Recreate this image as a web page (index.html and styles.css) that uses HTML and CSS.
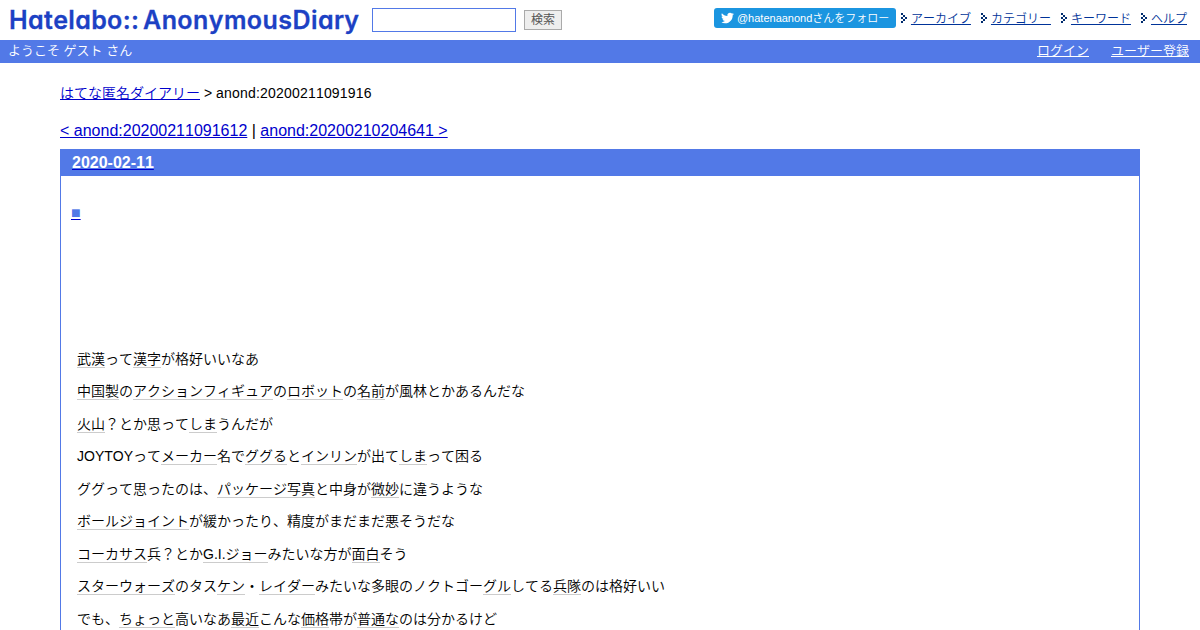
FILE: index.html
```html
<!DOCTYPE html>
<html lang="ja">
<head>
  <meta charset="UTF-8">
  <title>anond:20200211091916</title>
  <link rel="stylesheet" href="styles.css">
</head>
<body>

<svg class="defs" width="0" height="0">
  <symbol id="arrow" viewBox="0 0 7 10">
    <path d="M0 0h2v2h-2zM2 2h2v2h-2zM0 4h2v2h-2zM4 4h2v2h-2zM2 6h2v2h-2zM0 8h2v2h-2z"/>
  </symbol>
</svg>

<div class="header">
  <a class="logo" href="#">
    <svg width="360" height="40">
      <text x="9" y="28.5" textLength="130">Hatelabo::</text>
      <text x="143" y="28.5" textLength="216">AnonymousDiary</text>
    </svg>
  </a>
  <form class="search">
    <input type="text" class="search-word">
    <button type="button" class="search-button">検索</button>
  </form>
  <div class="menu">
    <a class="follow" href="#">
      <svg width="13" height="14" viewBox="0 0 24 24"><path d="M23.95 4.57a10 10 0 0 1-2.82.77 4.96 4.96 0 0 0 2.16-2.72c-.95.55-2 .95-3.13 1.18a4.92 4.92 0 0 0-8.38 4.48C7.69 8.1 4.07 6.13 1.64 3.16a4.82 4.82 0 0 0-.67 2.48c0 1.71.87 3.21 2.19 4.1a4.9 4.9 0 0 1-2.23-.62v.06a4.92 4.92 0 0 0 3.95 4.83 5 5 0 0 1-2.21.08 4.94 4.94 0 0 0 4.6 3.42A9.87 9.87 0 0 1 0 19.54a13.99 13.99 0 0 0 7.55 2.21c9.05 0 14-7.5 14-13.98 0-.21 0-.42-.02-.63a9.94 9.94 0 0 0 2.46-2.55z"/></svg>
      <span>@hatenaanondさんをフォロー</span>
    </a>
    <ul>
      <li><svg width="7" height="10"><use href="#arrow"/></svg><a href="#">アーカイブ</a></li>
      <li><svg width="7" height="10"><use href="#arrow"/></svg><a href="#">カテゴリー</a></li>
      <li><svg width="7" height="10"><use href="#arrow"/></svg><a href="#">キーワード</a></li>
      <li><svg width="7" height="10"><use href="#arrow"/></svg><a href="#">ヘルプ</a></li>
    </ul>
  </div>
</div>

<div class="guest-bar">
  <span>ようこそ ゲスト さん</span>
  <div class="guest-links">
    <a href="#">ログイン</a>
    <a href="#">ユーザー登録</a>
  </div>
</div>

<div class="content">
  <div class="breadcrumb"><a href="#">はてな匿名ダイアリー</a> &gt; <span class="title">anond:20200211091916</span></div>
  <div class="pager"><a href="#">&lt; anond:20200211091612</a> | <a href="#">anond:20200210204641 &gt;</a></div>

  <div class="day">
    <h2><a href="#">2020-02-11</a></h2>
    <div class="body">
      <h3><a href="#">■</a></h3>
      <div class="section">
        <p><a>武漢</a>って<a>漢字</a>が格好いいなあ</p>
        <p><a>中国製</a>の<a>アクションフィギュア</a>の<a>ロボット</a>の<a>名前</a>が風林とかあるんだな</p>
        <p><a>火山</a>？とか思って<a>しま</a>うんだが</p>
        <p>JOYTOYって<a>メーカー</a>名で<a>ググる</a>と<a>インリン</a>が出て<a>しま</a>って困る</p>
        <p>ググって思ったのは、<a>パッケージ</a><a>写真</a>と中身が<a>微妙</a>に違うような</p>
        <p><a>ボールジョイント</a>が緩かったり、精度がまだまだ悪そうだな</p>
        <p><a>コーカサス</a>兵？とか<a>G.I.ジョー</a>みたいな方が<a>面白</a>そう</p>
        <p><a>スターウォーズ</a>のタス<a>ケン</a>・<a>レイダー</a>みたいな多眼のノクトゴー<a>グル</a>してる<a>兵隊</a>のは格好いい</p>
        <p>でも、<a>ちょっと</a>高いなあ<a>最近</a>こんな<a>価格</a>帯が<a>普通な</a>のは分かるけど</p>
      </div>
    </div>
  </div>
</div>

</body>
</html>
```
FILE: styles.css
```css
* {
  box-sizing: border-box;
}
html {
  overflow: hidden;
}
body {
  margin: 0;
  background: #fff;
  color: #000;
  font-family: "Liberation Sans", "Noto Sans CJK JP", sans-serif;
  font-size: 14px;
  font-weight: 350;
  font-kerning: none;
}
a {
  color: #0000cc;
}
.defs {
  display: block;
}

/* header */
.header {
  display: flex;
  align-items: flex-start;
  height: 40px;
}
.logo svg {
  display: block;
}
.logo text {
  font-family: Inter, sans-serif;
  font-size: 25px;
  font-weight: 600;
  font-feature-settings: "cv11";
  fill: #1c41c4;
  stroke: #1c41c4;
  stroke-width: 0.3;
}
.search {
  display: flex;
  gap: 8px;
  padding: 8px 0 0 12px;
}
.search-word {
  width: 144px;
  height: 24px;
  border: 1px solid #5279e7;
  background: #fff;
}
.search-button {
  width: 38px;
  height: 20px;
  margin-top: 2px;
  padding: 0;
  border: 1px solid #aaa;
  background: #eee;
  color: #555;
  font: 12px/16px "Liberation Sans", "Noto Sans CJK JP", sans-serif;
}
.menu {
  display: flex;
  margin-left: auto;
  padding: 8px 13px 0 0;
}
.follow {
  display: flex;
  align-items: center;
  width: 182px;
  height: 20px;
  padding-left: 7px;
  border-radius: 3px;
  background: #1b95e0;
  color: #fff;
  font-size: 11px;
  line-height: 18px;
  white-space: nowrap;
  text-decoration: none;
}
.follow svg {
  margin-right: 3px;
  fill: #fff;
}
.menu ul {
  display: flex;
  gap: 10px;
  margin: 0;
  padding: 0 0 0 5px;
  list-style: none;
}
.menu li {
  display: flex;
  align-items: center;
  height: 20px;
  font-size: 12px;
  line-height: 18px;
}
.menu li svg {
  margin-right: 3px;
  fill: #002c6e;
}
.menu li a {
  margin-top: 1px;
  color: #003399;
}

/* guest bar */
.guest-bar {
  display: flex;
  justify-content: space-between;
  height: 23px;
  padding: 0 11px 0 8px;
  background: #5279e7;
  color: #fff;
  font-size: 13px;
  line-height: 22px;
}
.guest-links {
  display: flex;
  gap: 22px;
}
.guest-links a {
  color: #fff;
}

/* diary */
.content {
  margin: 0 60px;
}
.breadcrumb {
  padding-top: 20px;
  line-height: 20px;
}
.breadcrumb .title {
  letter-spacing: 0.2px;
}
.pager {
  margin-top: 18px;
  font-size: 16px;
  line-height: 20px;
}
.day {
  margin-top: 8px;
  border: 1px solid #5279e7;
}
.day h2 {
  margin: 0;
  padding-left: 11px;
  background: #5279e7;
  font-size: 16px;
  line-height: 26px;
}
.day h2 a {
  color: #fff;
  text-decoration-color: #0000cc;
}
.body {
  padding: 27px 16px 0 10px;
}
.body h3 {
  height: 146.5px;
  margin: 0;
  font-size: 16px;
  line-height: 20px;
}
.body h3 a {
  color: #5279e7;
  text-decoration-color: #0000cc;
}
.section {
  padding-left: 6px;
}
.section p {
  height: 18.5px;
  margin: 0 0 14px;
  line-height: 18.5px;
}
.section p a {
  border-bottom: 1px solid #ccc;
  color: #000;
}
```
